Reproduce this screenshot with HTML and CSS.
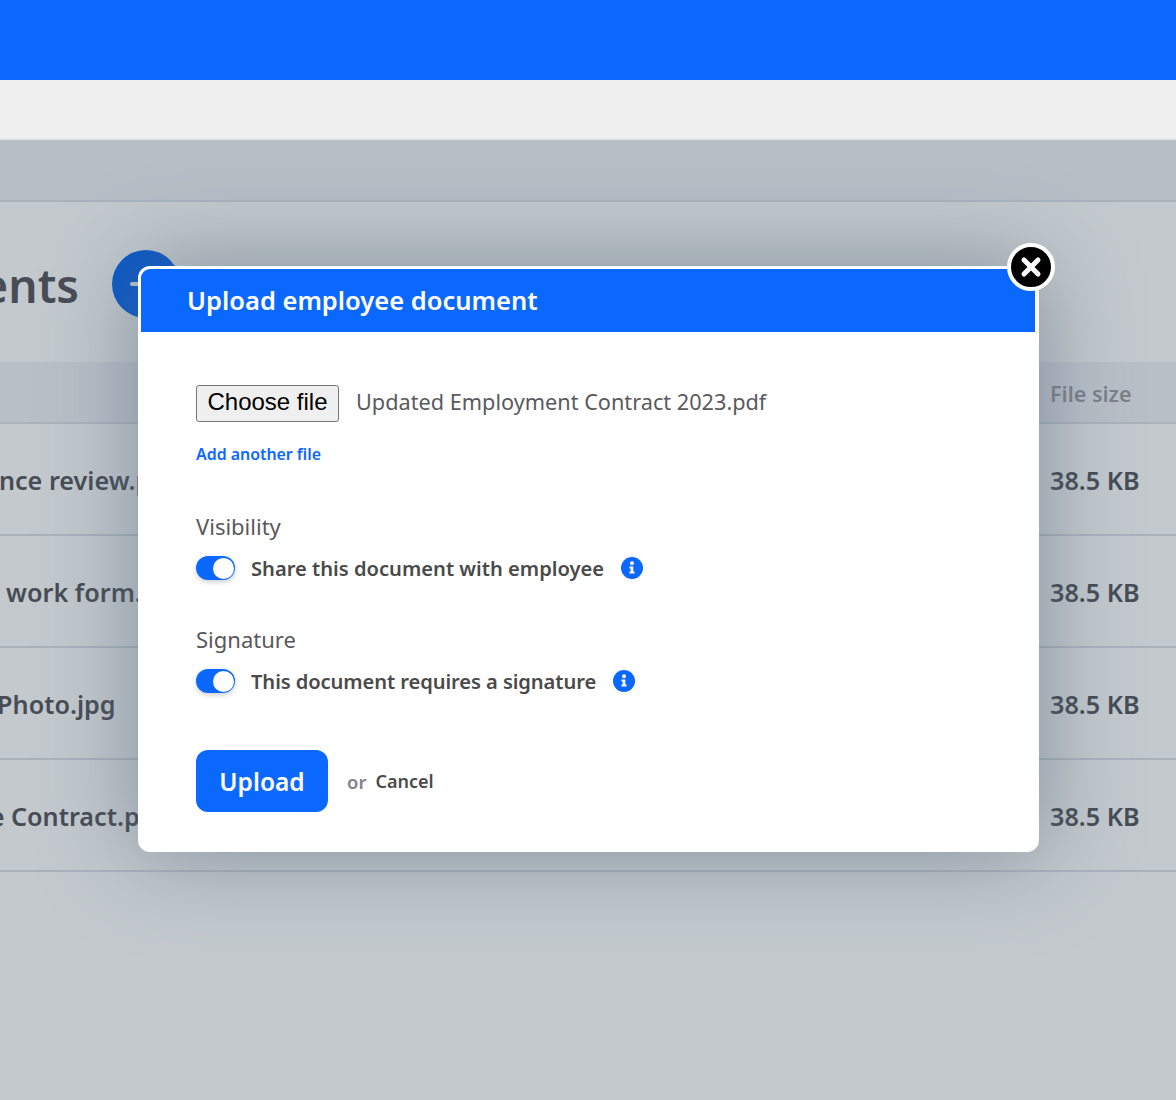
FILE: index.html
```html
<!DOCTYPE html>
<html lang="en">
<head>
<meta charset="utf-8">
<title>Upload employee document</title>
<link rel="stylesheet" href="styles.css">
</head>
<body>
<div class="page">
  <header class="topbar"></header>
  <div class="toolbar"></div>
  <div class="subnav"></div>
  <main class="content">
    <div class="heading-row">
      <h1 class="title">Documents</h1>
      <span class="add-btn"><svg width="68" height="68" viewBox="0 0 68 68"><path d="M34 20v28M20 34h28" stroke="#c3c9ce" stroke-width="4" stroke-linecap="round" fill="none"/></svg></span>
    </div>
    <div class="row head"><span>Name</span><span>File size</span></div>
    <div class="row"><span>Performance review.pdf</span><span>38.5 KB</span></div>
    <div class="row"><span>Return to work form.pdf</span><span>38.5 KB</span></div>
    <div class="row"><span>Passport Photo.jpg</span><span>38.5 KB</span></div>
    <div class="row"><span class="name-shift">Employee Contract.pdf</span><span>38.5 KB</span></div>
  </main>

  <section class="modal">
    <button class="close" aria-label="Close"><svg width="40" height="40" viewBox="0 0 40 40"><path d="M13 13l14 14M27 13L13 27" stroke="#fff" stroke-width="5" stroke-linecap="round" fill="none"/></svg></button>
    <h2 class="modal-title">Upload employee document</h2>
    <div class="modal-body">
      <div class="file-row">
        <button class="file-btn">Choose file</button>
        <span class="file-name">Updated Employment Contract 2023.pdf</span>
      </div>
      <a class="add-link">Add another file</a>
      <div class="field-label first">Visibility</div>
      <div class="toggle-row">
        <span class="toggle"></span>
        <span class="toggle-label">Share this document with employee</span>
        <svg class="info" width="22" height="22" viewBox="0 0 22 22"><circle cx="11" cy="11" r="11" fill="#0b68ff"/><path d="M9 6.300a2 2 0 1 1 4 0 2 2 0 0 1-4 0zM8.500 9.500h3.800v5h1.200v2h-5v-2h1.200v-3h-1.200z" fill="#fff"/></svg>
      </div>
      <div class="field-label">Signature</div>
      <div class="toggle-row">
        <span class="toggle"></span>
        <span class="toggle-label tight">This document requires a signature</span>
        <svg class="info" width="22" height="22" viewBox="0 0 22 22"><circle cx="11" cy="11" r="11" fill="#0b68ff"/><path d="M9 6.300a2 2 0 1 1 4 0 2 2 0 0 1-4 0zM8.500 9.500h3.800v5h1.200v2h-5v-2h1.200v-3h-1.200z" fill="#fff"/></svg>
      </div>
      <div class="actions">
        <button class="upload">Upload</button>
        <span class="or">or</span>
        <a class="cancel">Cancel</a>
      </div>
    </div>
  </section>
</div>
</body>
</html>
```
FILE: styles.css
```css
* { box-sizing: border-box; }
html, body { margin: 0; padding: 0; }
body { font-family: "Noto Sans", sans-serif; background: #c3c9cd; }
.page { position: relative; width: 1176px; height: 1100px; overflow: hidden; background: #c3c9cd; }
.topbar { height: 80px; background: #0b68ff; }
.toolbar { height: 60px; background: #f0f0f0; border-bottom: 2px solid #e1e4e8; }
.subnav { height: 62px; background: #b6bec6; border-bottom: 2px solid #a9b3bc; }
.content { margin-left: -117px; color: #474c55; }
.heading-row { width: 297px; height: 160px; display: flex; align-items: center; justify-content: flex-end; gap: 33px; }
.title { margin: 0; font-size: 46px; font-weight: 600; line-height: 60px; white-space: nowrap; position: relative; top: 3px; flex: none; }
.add-btn { width: 68px; height: 68px; border-radius: 50%; background: #0a58c8; display: block; flex: none; position: relative; top: 2px; }
.add-btn svg { display: block; }
.row { display: grid; grid-template-columns: 1fr 126px; align-items: center; height: 112px; border-bottom: 2px solid #aab3bc; font-size: 25.2px; font-weight: 600; white-space: nowrap; padding-top: 2px; }
.row.head { height: 62px; background: #b9bfc7; color: #7c828a; font-size: 21.5px; }
.name-shift { padding-left: 2px; }
.modal { position: absolute; left: 138px; top: 266px; width: 901px; height: 586px; background: #fff; border-radius: 12px; border: solid #fff; border-width: 3px 4px 3px 3px; box-shadow: 0 0 90px rgba(85, 105, 125, .6); color: #4a4a4a; }
.modal-title { margin: 0; height: 63px; padding-left: 46px; background: #0b68ff; color: #fff; font-size: 25.500px; font-weight: 600; line-height: 63px; border-radius: 9px 9px 0 0; }
.close { position: absolute; right: -20px; top: -26px; width: 48px; height: 48px; padding: 0; border: 4px solid #fff; border-radius: 50%; background: #000; display: flex; align-items: center; justify-content: center; }
.modal-body { padding: 53px 0 0 55px; }
.file-row { display: flex; align-items: center; gap: 17px; height: 37px; }
.file-btn { width: 143px; height: 37px; padding: 0 0 3px; font-family: "Liberation Sans", sans-serif; font-size: 24px; color: #000; background: #efefef; border: 1px solid #767676; border-radius: 3px; }
.file-name { font-size: 21.7px; color: #5a5a5e; white-space: nowrap; position: relative; top: -2px; }
.add-link { display: block; margin-top: 20px; color: #0b68ff; font-size: 15.900px; font-weight: 600; line-height: 24px; }
.field-label { margin-top: 45px; font-size: 22px; line-height: 28px; color: #58585c; }
.field-label.first { margin-top: 46px; }
.toggle-row { margin-top: 16px; height: 24px; display: flex; align-items: center; }
.toggle { position: relative; width: 39px; height: 24px; border-radius: 12px; background: #0b68ff; box-shadow: 0 2px 5px rgba(0, 0, 0, .2); flex: none; }
.toggle::after { content: ""; position: absolute; right: 1px; top: 1.500px; width: 21px; height: 21px; border-radius: 50%; background: #fff; }
.toggle-label { margin-left: 16px; font-size: 20.150px; font-weight: 600; line-height: 24px; white-space: nowrap; }
.toggle-label.tight { letter-spacing: -.09px; }
.info { margin-left: 17px; flex: none; }
.actions { margin-top: 57px; display: flex; align-items: center; }
.upload { width: 132px; height: 62px; padding: 0; background: #0b68ff; color: #fff; border: 0; border-radius: 12px; font-family: inherit; font-size: 24.500px; font-weight: 600; }
.or { margin-left: 19px; font-size: 18.500px; font-weight: 600; color: #7f8389; }
.cancel { margin-left: 9px; font-size: 18px; font-weight: 600; color: #4a4a4a; }
```
